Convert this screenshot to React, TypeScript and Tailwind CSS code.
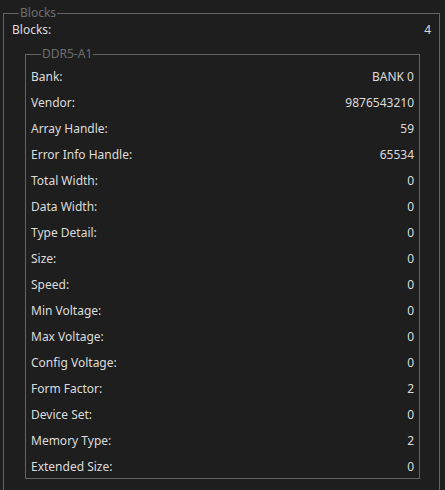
const rows: [string, string][] = [
  ['Bank:', 'BANK 0'],
  ['Vendor:', '9876543210'],
  ['Array Handle:', '59'],
  ['Error Info Handle:', '65534'],
  ['Total Width:', '0'],
  ['Data Width:', '0'],
  ['Type Detail:', '0'],
  ['Size:', '0'],
  ['Speed:', '0'],
  ['Min Voltage:', '0'],
  ['Max Voltage:', '0'],
  ['Config Voltage:', '0'],
  ['Form Factor:', '2'],
  ['Device Set:', '0'],
  ['Memory Type:', '2'],
  ['Extended Size:', '0'],
];

export default function App() {
  return (
    <div className="w-[445px] h-[490px] overflow-hidden bg-[#1e1e1e] text-[12px] leading-[16px] text-[#dcdcdc] font-['Noto_Sans',sans-serif]">
      {/* Blocks group */}
      <fieldset className="mt-[5px] ml-[3px] w-[437px] border border-[#646464] px-2 pb-6">
        <legend className="ml-[7px] px-px text-[#6e6e6e]">Blocks</legend>
        <div className="flex justify-between pt-px">
          <span>Blocks:</span>
          <span>4</span>
        </div>

        {/* DDR5-A1 group */}
        <fieldset className="mt-[8px] ml-[13px] mr-[11px] border border-[#646464] p-0">
          <legend className="ml-[15px] px-px text-[#6e6e6e]">DDR5-A1</legend>
          {rows.map(([label, value]) => (
            <div key={label} className="flex h-[26px] items-center justify-between px-[5px] pt-1">
              <span>{label}</span>
              <span>{value}</span>
            </div>
          ))}
        </fieldset>
      </fieldset>
    </div>
  );
}
